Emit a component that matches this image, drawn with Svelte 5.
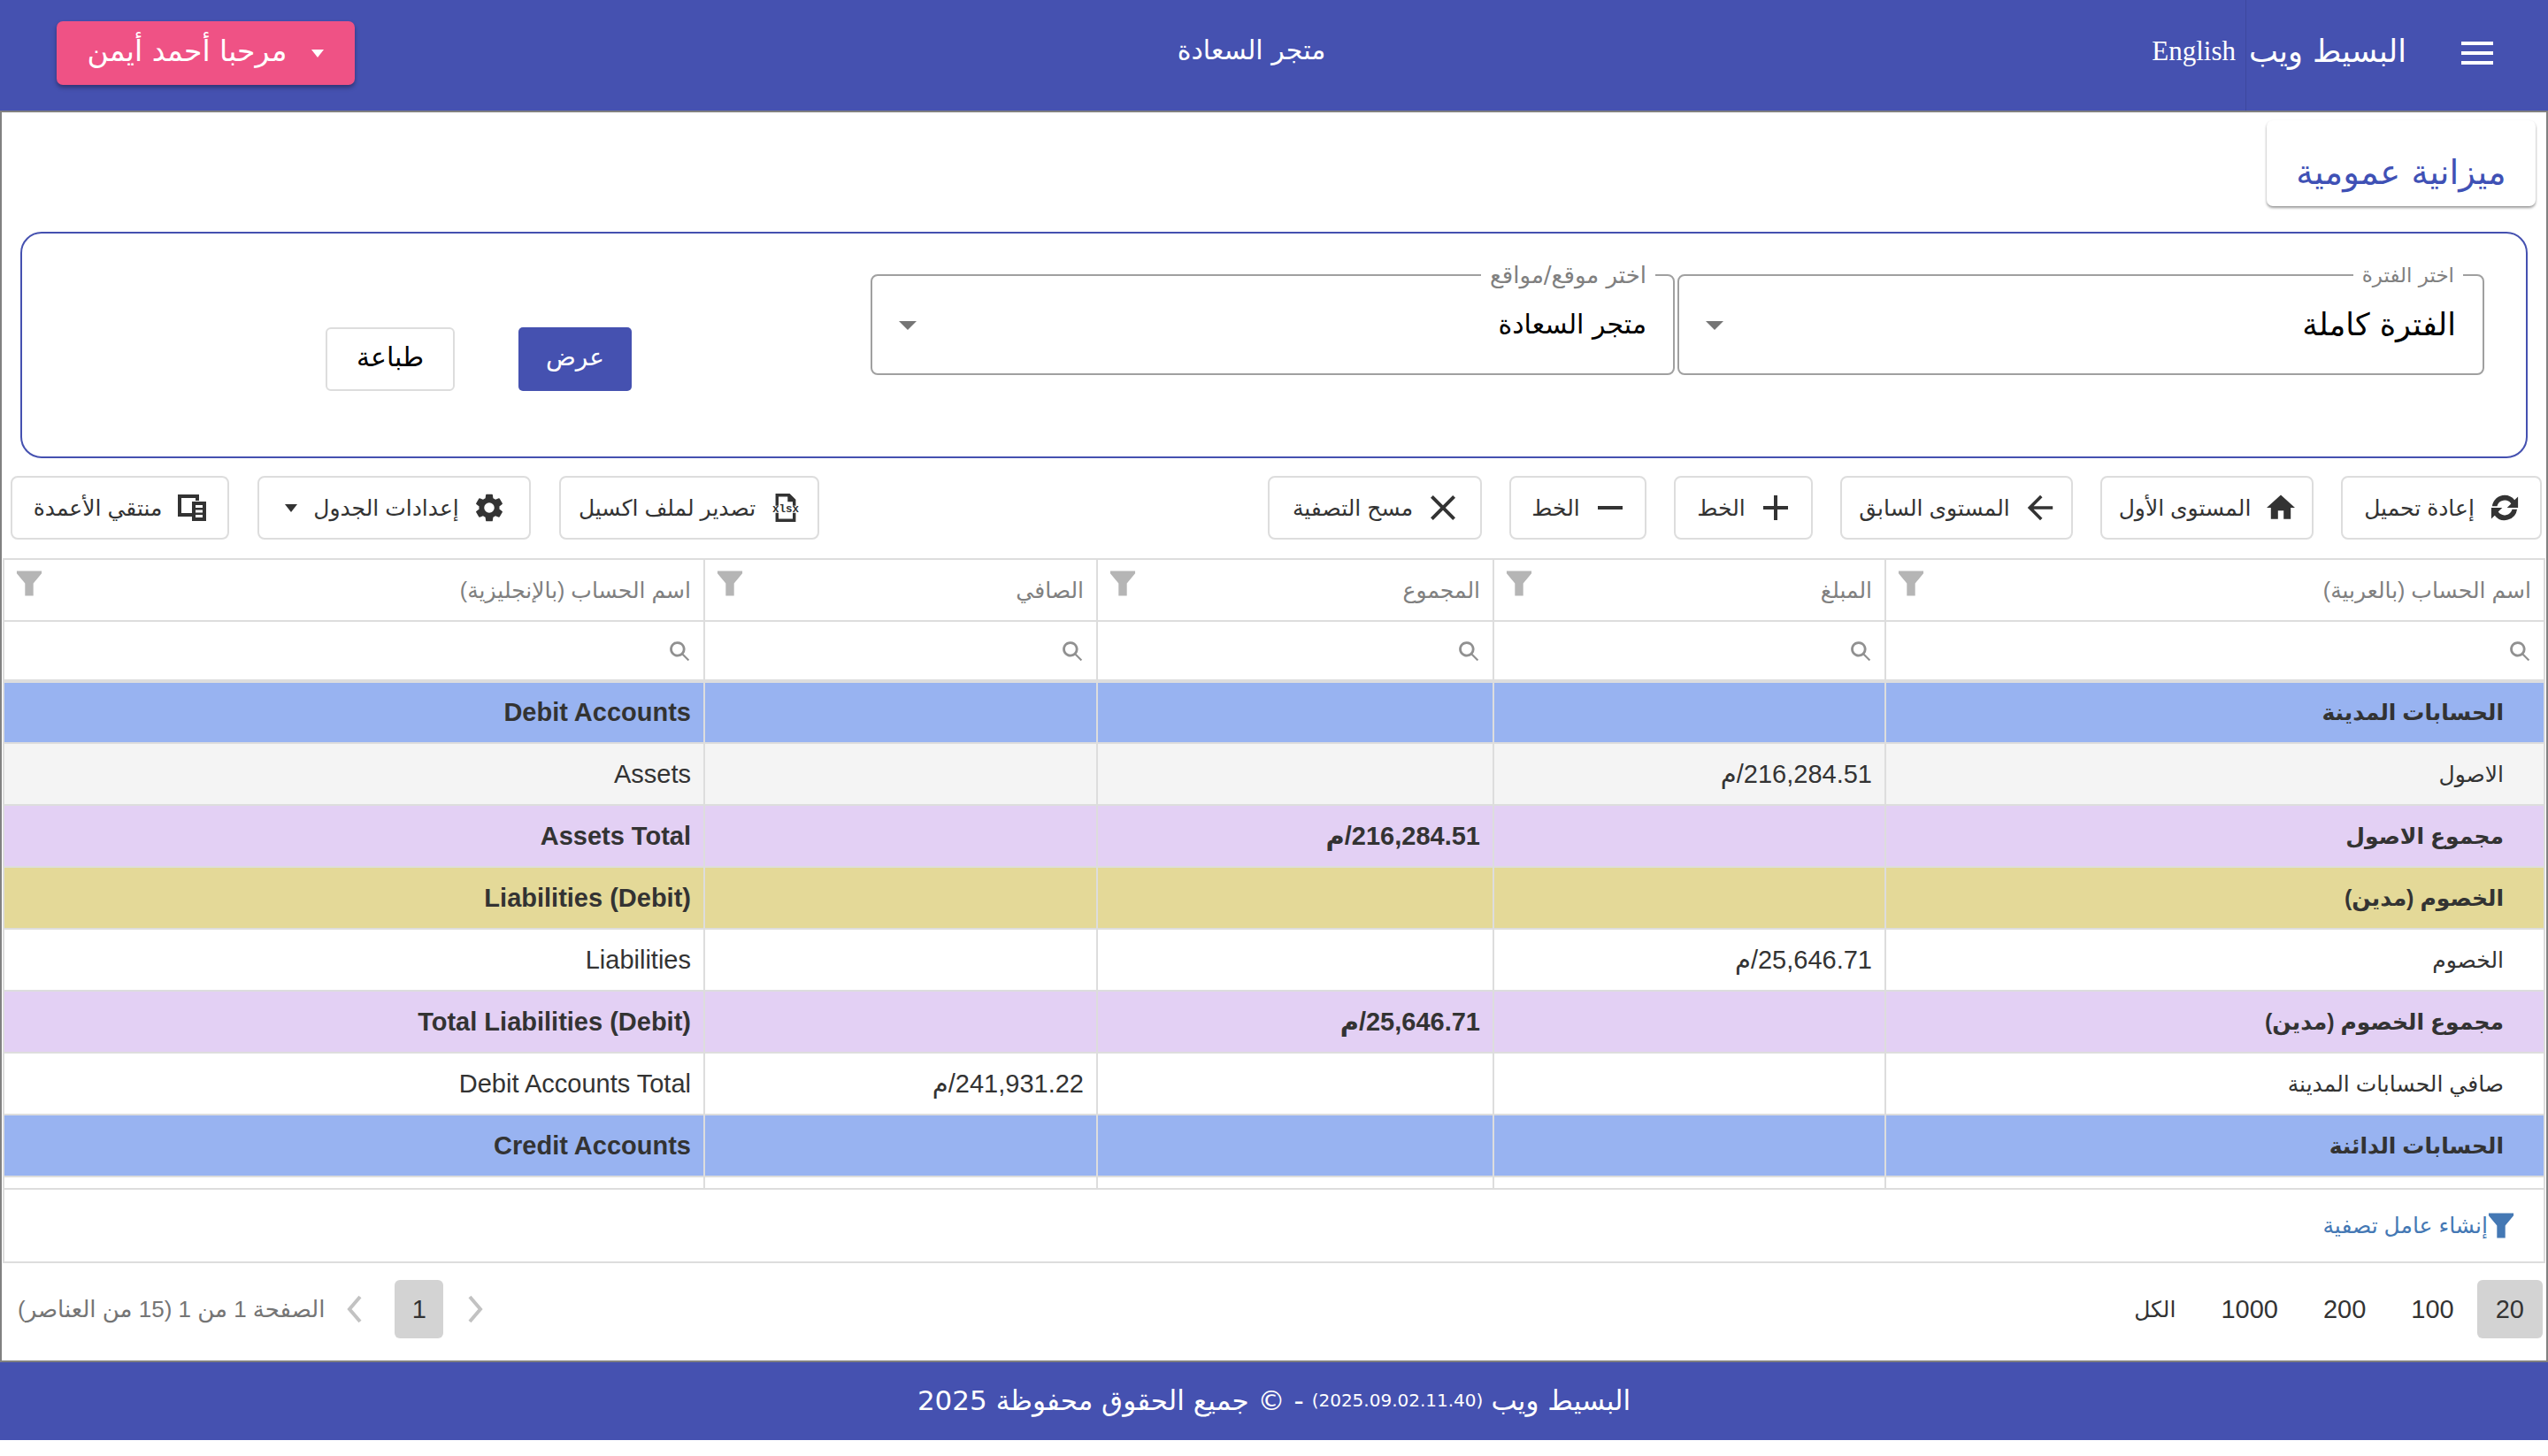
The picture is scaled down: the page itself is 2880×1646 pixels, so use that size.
<script lang="ts">
	const toolsRight = [
		{ label: 'إعادة تحميل', icon: 'refresh', w: 227 },
		{ label: 'المستوى الأول', icon: 'home', w: 241 },
		{ label: 'المستوى السابق', icon: 'back', w: 263 },
		{ label: 'الخط', icon: 'plus', w: 157 },
		{ label: 'الخط', icon: 'minus', w: 155 },
		{ label: 'مسح التصفية', icon: 'close', w: 242 }
	];
	const toolsLeft = [
		{ label: 'تصدير لملف اكسيل', icon: 'xlsx', w: 294 },
		{ label: 'إعدادات الجدول', icon: 'gear', w: 309, caret: true },
		{ label: 'منتقي الأعمدة', icon: 'columns', w: 247 }
	];

	// cropped viewBoxes so that every glyph fills the same 32px box
	const icons: Record<string, { box: string; d: string }> = {
		refresh: {
			box: '3 3 18 18',
			d: 'M12 4a8 8 0 0 1 6.300 3.100L20.500 5v7h-7l2.600-2.600A5 5 0 0 0 7.200 11H4.100A8 8 0 0 1 12 4zM3.500 12h7l-2.600 2.600A5 5 0 0 0 16.800 13h3.100A8 8 0 0 1 5.700 16.900L3.500 19z'
		},
		home: { box: '2 2 20 20', d: 'M10 20v-6h4v6h5v-8h3L12 3 2 12h3v8z' },
		back: {
			box: '3 3 18 18',
			d: 'M20 11H7.830l5.590-5.590L12 4l-8 8 8 8 1.410-1.410L7.830 13H20v-2z'
		},
		plus: { box: '4 4 16 16', d: 'M19 13h-6v6h-2v-6H5v-2h6V5h2v6h6v2z' },
		minus: { box: '4 4 16 16', d: 'M19 13H5v-2h14v2z' },
		close: {
			box: '4 4 16 16',
			d: 'M19 6.410 17.590 5 12 10.590 6.410 5 5 6.410 10.590 12 5 17.590 6.410 19 12 13.410 17.590 19 19 17.590 13.410 12z'
		},
		gear: {
			box: '2 2 20 20',
			d: 'M19.140 12.940c.04-.3.060-.61.060-.94 0-.32-.020-.64-.070-.94l2.030-1.580a.49.49 0 0 0 .120-.61l-1.920-3.320a.49.49 0 0 0-.590-.220l-2.390.96c-.5-.38-1.030-.7-1.620-.94l-.36-2.540a.480.480 0 0 0-.480-.41h-3.840a.480.480 0 0 0-.470.41l-.36 2.540c-.59.24-1.130.57-1.620.94l-2.390-.96a.490.490 0 0 0-.590.220L2.740 8.870a.480.480 0 0 0 .120.610l2.030 1.580c-.05.3-.090.63-.090.94s.020.64.070.94l-2.030 1.580a.49.49 0 0 0-.120.610l1.920 3.320c.12.220.37.290.590.220l2.390-.96c.5.38 1.030.7 1.620.94l.36 2.540c.05.240.24.410.48.410h3.840c.24 0 .44-.17.470-.41l.36-2.540c.59-.24 1.130-.56 1.620-.94l2.390.96c.22.080.47 0 .59-.22l1.920-3.320a.48.480 0 0 0-.120-.61l-2.010-1.580zM12 15.600A3.600 3.600 0 1 1 12 8.400a3.600 3.600 0 0 1 0 7.200z'
		},
		columns: {
			box: '0 0 32 30',
			d: 'M0 0h24v7h-4V4H4v17h12v4H0zM16 8h16v22H16zM20 12v3h8v-3zM20 17.500v3h8v-3zM20 23v3h8v-3z'
		}
	};

	type Row = { kind: string; ar: string; amount?: string; total?: string; net?: string; en: string };
	const rows: Row[] = [
		{ kind: 'blue', ar: 'الحسابات المدينة', en: 'Debit Accounts' },
		{ kind: 'shade', ar: 'الاصول', amount: '216,284.51/م', en: 'Assets' },
		{ kind: 'purple', ar: 'مجموع الاصول', total: '216,284.51/م', en: 'Assets Total' },
		{ kind: 'yellow', ar: 'الخصوم (مدين)', en: 'Liabilities (Debit)' },
		{ kind: 'plain', ar: 'الخصوم', amount: '25,646.71/م', en: 'Liabilities' },
		{ kind: 'purple', ar: 'مجموع الخصوم (مدين)', total: '25,646.71/م', en: 'Total Liabilities (Debit)' },
		{ kind: 'plain', ar: 'صافي الحسابات المدينة', net: '241,931.22/م', en: 'Debit Accounts Total' },
		{ kind: 'blue', ar: 'الحسابات الدائنة', en: 'Credit Accounts' }
	];
	const columns = ['اسم الحساب (بالعربية)', 'المبلغ', 'المجموع', 'الصافي', 'اسم الحساب (بالإنجليزية)'];
	const pageSizes = ['20', '100', '200', '1000', 'الكل'];
</script>

{#snippet funnel(cls)}
	<svg class={cls} viewBox="0 0 32 30"><path d="M1 0h30v3L21 15v15H11V15L1 3z" /></svg>
{/snippet}

<div class="page" dir="rtl">
	<header class="topbar">
		<div class="brand">
			<button class="menu" aria-label="menu"><span></span><span></span><span></span></button>
			<span class="brand-name">البسيط ويب</span>
		</div>
		<span class="lang">English</span>
		<span class="store">متجر السعادة</span>
		<button class="user">
			<i class="caret white"></i>
			<span class="user-name">مرحبا أحمد أيمن</span>
		</button>
	</header>

	<main class="content">
		<div class="title-row"><h1>ميزانية عمومية</h1></div>

		<section class="filters">
			<fieldset class="select period">
				<legend>اختر الفترة</legend>
				<span class="value big">الفترة كاملة</span>
				<i class="caret grey"></i>
			</fieldset>
			<fieldset class="select site">
				<legend>اختر موقع/مواقع</legend>
				<span class="value">متجر السعادة</span>
				<i class="caret grey"></i>
			</fieldset>
			<button class="primary">عرض</button>
			<button class="print">طباعة</button>
		</section>

		<div class="toolbar">
			<div class="tool-group">
				{#each toolsRight as t}
					<button class="tool" style="width:{t.w}px">
						<svg class="ico" viewBox={icons[t.icon].box}><path d={icons[t.icon].d} /></svg>
						<span>{t.label}</span>
					</button>
				{/each}
			</div>
			<div class="tool-group left">
				{#each toolsLeft as t}
					<button class="tool" style="width:{t.w}px">
						{#if t.icon === 'xlsx'}
							<svg class="ico" viewBox="0 0 28 28">
								<path d="M4 0h14l6 6v6h-3V8h-5V3H7v9H4zM4 19h3v6h14v-6h3v9H4z" />
								<text x="14" y="18" text-anchor="middle" class="xlsx-text">xlsx</text>
							</svg>
						{:else}
							<svg class="ico" viewBox={icons[t.icon].box}><path fill-rule="evenodd" d={icons[t.icon].d} /></svg>
						{/if}
						<span>{t.label}</span>
						{#if t.caret}<i class="caret dark"></i>{/if}
					</button>
				{/each}
			</div>
		</div>

		<div class="grid">
			<table>
				<colgroup>
					<col style="width:744px" /><col style="width:443px" /><col style="width:448px" /><col style="width:444px" /><col />
				</colgroup>
				<thead>
					<tr class="heads">
						{#each columns as c}
							<th>
								<span>{c}</span>
								{@render funnel('funnel')}
							</th>
						{/each}
					</tr>
					<tr class="search">
						{#each columns as c}
							<th aria-label={c}>
								<svg class="lens" viewBox="0 0 24 24"><path d="M10 2a8 8 0 0 1 6.300 12.900l6 6-1.400 1.400-6-6A8 8 0 1 1 10 2zm0 2.500a5.500 5.500 0 1 0 0 11 5.500 5.500 0 0 0 0-11z" /></svg>
							</th>
						{/each}
					</tr>
				</thead>
				<tbody>
					{#each rows as r}
						<tr class={r.kind}>
							<td class="ar">{r.ar}</td>
							<td>{r.amount ?? ''}</td>
							<td>{r.total ?? ''}</td>
							<td>{r.net ?? ''}</td>
							<td>{r.en}</td>
						</tr>
					{/each}
					<tr class="stub"><td></td><td></td><td></td><td></td><td></td></tr>
				</tbody>
			</table>
			<div class="filter-panel">
				{@render funnel('funnel blue-funnel')}
				<span>إنشاء عامل تصفية</span>
			</div>
		</div>

		<div class="pager">
			<div class="sizes">
				{#each pageSizes as s, i}
					<span class="size" class:active={i === 0} class:word={i === 4}>{s}</span>
				{/each}
			</div>
			<div class="pages">
				<svg class="chev" viewBox="0 0 20 32"><path d="M4 2l12 14L4 30" /></svg>
				<span class="num">1</span>
				<svg class="chev" viewBox="0 0 20 32"><path d="M16 2L4 16l12 14" /></svg>
				<span class="info">الصفحة 1 من 1 (15 من العناصر)</span>
			</div>
		</div>
	</main>

	<footer class="bottom">
		<span>البسيط ويب</span>
		<small>(2025.09.02.11.40)</small>
		<span>- © جميع الحقوق محفوظة 2025</span>
	</footer>
</div>

<style>
	:global(body) {
		margin: 0;
		background: #fff;
	}
	.page {
		width: 2880px;
		font-family: 'DejaVu Sans', sans-serif;
		color: #000;
	}
	button {
		font: inherit;
		background: none;
		border: 0;
		padding: 0;
	}
	.caret {
		display: block;
		width: 0;
		height: 0;
		border-left: 7px solid transparent;
		border-right: 7px solid transparent;
		border-top: 9px solid currentColor;
	}
	.caret.white {
		color: #fff;
	}
	.caret.grey {
		color: #757575;
		border-left-width: 10px;
		border-right-width: 10px;
		border-top-width: 10px;
	}
	.caret.dark {
		color: #333;
	}

	.topbar {
		height: 125px;
		box-sizing: content-box;
		background: #4551b0;
		border-bottom: 2px solid #808080;
		display: flex;
		align-items: center;
		color: #fff;
		padding-inline-start: 62px;
		padding-inline-end: 64px;
	}
	.brand {
		display: flex;
		align-items: center;
		align-self: stretch;
		border-left: 1px solid #3d489f;
		width: 280px;
		padding-bottom: 5px;
		box-sizing: border-box;
	}
	.menu {
		display: flex;
		flex-direction: column;
		gap: 7px;
		width: 36px;
		flex: none;
	}
	.menu span {
		display: block;
		height: 4px;
		background: #fff;
	}
	.brand-name {
		font-size: 35px;
		margin-inline-start: 62px;
		padding-bottom: 5px;
		white-space: nowrap;
	}
	.lang {
		font-family: 'Liberation Serif', serif;
		font-size: 31px;
		margin-inline-start: 11px;
		margin-bottom: 10px;
	}
	.store {
		font-size: 30px;
		margin-inline-start: 934px;
		margin-bottom: 12px;
		white-space: nowrap;
	}
	.user {
		width: 337px;
		height: 72px;
		margin-inline-start: auto;
		margin-bottom: 5px;
		border-radius: 7px;
		background: #ef5285;
		color: #fff;
		font-size: 33px;
		display: flex;
		align-items: center;
		justify-content: center;
		gap: 28px;
		box-shadow: 0 3px 5px rgba(0, 0, 0, 0.35);
	}
	.user-name {
		padding-bottom: 6px;
	}

	.content {
		border-left: 2px solid #808080;
		border-right: 2px solid #808080;
		border-bottom: 2px solid #808080;
		height: 1413px;
		box-sizing: border-box;
	}
	.title-row {
		display: flex;
		padding-top: 9px;
		padding-inline-start: 12px;
		height: 126px;
		box-sizing: border-box;
	}
	h1 {
		margin: 0;
		width: 304px;
		height: 97px;
		box-sizing: border-box;
		border-radius: 7px;
		box-shadow: 0 2px 3px rgba(0, 0, 0, 0.4);
		color: #3f51b5;
		font-size: 38.5px;
		font-weight: 400;
		text-align: center;
		padding-top: 34px;
		line-height: 50px;
	}

	.filters {
		margin: 9px 21px 0;
		height: 256px;
		box-sizing: border-box;
		border: 2px solid #4551b0;
		border-radius: 24px;
		display: flex;
		align-items: flex-start;
		padding-top: 34px;
		padding-inline-start: 47px;
	}
	.select {
		margin: 0;
		box-sizing: border-box;
		height: 126px;
		border: 2px solid #a0a0a0;
		border-radius: 8px;
		padding: 0 30px;
		display: flex;
		align-items: center;
		justify-content: space-between;
	}
	.period {
		width: 912px;
	}
	.site {
		width: 909px;
		margin-inline-start: 3px;
	}
	legend {
		font-size: 23px;
		color: #808080;
		padding: 0 10px;
		line-height: 26px;
		margin-inline-start: -8px;
	}
	.site legend {
		font-size: 26px;
		margin-inline-start: -10px;
	}
	.value {
		font-size: 30px;
		line-height: 40px;
		margin-top: -12px;
	}
	.value.big {
		font-size: 35px;
	}
	.select .caret {
		margin-top: -10px;
	}
	.primary {
		width: 128px;
		height: 72px;
		margin-top: 72px;
		margin-inline-start: 270px;
		padding-bottom: 6px;
		border-radius: 5px;
		background: #4551b0;
		color: #fff;
		font-size: 28px;
	}
	.print {
		width: 146px;
		height: 72px;
		margin-top: 72px;
		margin-inline-start: 72px;
		padding-bottom: 6px;
		box-sizing: border-box;
		border: 2px solid #ddd;
		border-radius: 6px;
		font-size: 30px;
	}

	.toolbar {
		display: flex;
		justify-content: space-between;
		margin-top: 20px;
		padding: 0 5px 0 10px;
		height: 73px;
		font-family: 'Liberation Sans', 'DejaVu Sans', sans-serif;
	}
	.tool-group {
		display: flex;
		gap: 31px;
	}
	.tool-group.left {
		gap: 32px;
	}
	.tool {
		box-sizing: border-box;
		height: 72px;
		border: 2px solid #ddd;
		border-radius: 8px;
		display: flex;
		align-items: center;
		justify-content: center;
		gap: 18px;
		font-size: 25px;
		color: #333;
	}
	.ico {
		width: 32px;
		height: 32px;
		fill: #333;
		flex: none;
	}
	.xlsx-text {
		font: 700 11px 'Liberation Mono', monospace;
	}

	.grid {
		margin: 20px 1px 0;
		border-bottom: 2px solid #ddd;
		border-right: 2px solid #ddd;
		border-left: 2px solid #ddd;
		height: 797px;
		box-sizing: border-box;
		font-family: 'Liberation Sans', 'DejaVu Sans', sans-serif;
	}
	table {
		width: 100%;
		table-layout: fixed;
		border-collapse: collapse;
	}
	th,
	td {
		border-left: 2px solid #ddd;
		padding: 0 14px;
		text-align: right;
		box-sizing: border-box;
	}
	th:last-child,
	td:last-child {
		border-left: 0;
	}
	thead tr {
		border-top: 2px solid #ddd;
	}
	.heads th {
		height: 70px;
		position: relative;
		font-weight: 400;
		font-size: 25px;
		color: #808080;
	}
	.funnel {
		position: absolute;
		top: 12px;
		left: 13px;
		width: 30px;
		height: 29px;
		fill: #b5b5b5;
	}
	.search th {
		height: 68px;
		border-bottom: 4px solid #ddd;
	}
	.lens {
		display: block;
		width: 26px;
		height: 26px;
		fill: #909090;
	}
	tbody tr {
		height: 70px;
		border-bottom: 2px solid #ddd;
		font-size: 29px;
		color: #333;
	}
	td.ar {
		font-size: 25px;
		padding-right: 45px;
	}
	.blue {
		background: #98b3f1;
		font-weight: 700;
	}
	.purple {
		background: #e3d0f4;
		font-weight: 700;
	}
	.yellow {
		background: #e4d998;
		font-weight: 700;
	}
	.shade {
		background: #f4f4f4;
	}
	tbody .stub {
		height: 14px;
	}
	.filter-panel {
		display: flex;
		align-items: center;
		height: 80px;
		padding-inline-start: 33px;
		color: #4478b4;
		font-size: 25px;
	}
	.filter-panel .funnel {
		position: static;
	}
	.filter-panel .blue-funnel {
		fill: #4478b4;
	}

	.pager {
		display: flex;
		justify-content: space-between;
		align-items: center;
		height: 104px;
		padding: 0 4px 0 18px;
		font-family: 'Liberation Sans', 'DejaVu Sans', sans-serif;
		font-size: 29px;
		color: #333;
	}
	.sizes {
		display: flex;
		align-items: center;
		gap: 9px;
	}
	.size {
		height: 66px;
		line-height: 66px;
		padding: 0 21px;
		border-radius: 6px;
	}
	.size.active {
		background: #d3d3d3;
		margin-inline-end: -4px;
	}
	.size.word {
		font-size: 25px;
	}
	.pages {
		display: flex;
		align-items: center;
	}
	.chev {
		width: 20px;
		height: 32px;
		fill: none;
		stroke: #c2c2c2;
		stroke-width: 4;
	}
	.num {
		width: 55px;
		height: 66px;
		line-height: 66px;
		text-align: center;
		background: #d3d3d3;
		border-radius: 6px;
		margin: 0 26px 0 35px;
	}
	.info {
		font-size: 26px;
		color: #757575;
		margin-inline-start: 24px;
	}

	.bottom {
		height: 88px;
		box-sizing: border-box;
		padding-bottom: 2px;
		background: #4551b0;
		color: #fff;
		font-size: 31px;
		display: flex;
		align-items: center;
		justify-content: center;
		gap: 9px;
	}
	.bottom small {
		font-size: 20px;
	}
</style>
